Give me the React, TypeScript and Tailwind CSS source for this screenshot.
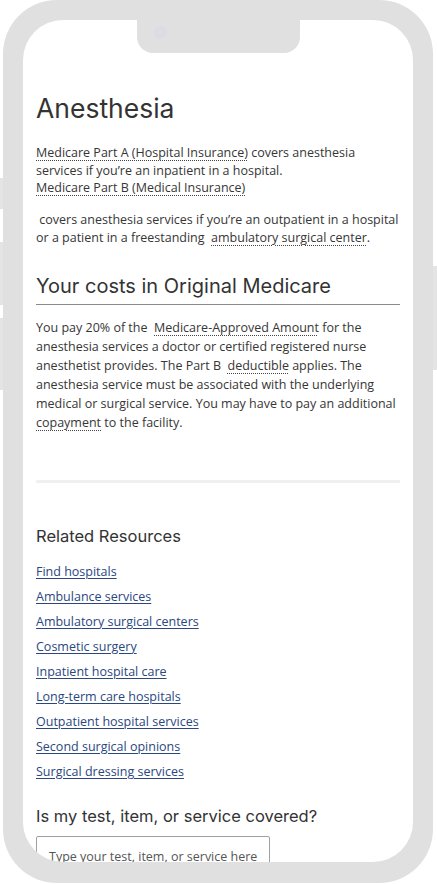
import React from "react";

const heading = "font-['Inter','Noto_Sans',sans-serif]";
const body = "font-['Open_Sans','Noto_Sans',sans-serif]";

function Term({ children }: { children: React.ReactNode }) {
  return (
    <span className="underline decoration-dotted decoration-[#444] decoration-1 underline-offset-[3px]">
      {children}
    </span>
  );
}

const resources = [
  "Find hospitals",
  "Ambulance services",
  "Ambulatory surgical centers",
  "Cosmetic surgery",
  "Inpatient hospital care",
  "Long-term care hospitals",
  "Outpatient hospital services",
  "Second surgical opinions",
  "Surgical dressing services",
];

export default function App() {
  return (
    <div className="relative w-[437px] h-[884px] bg-white overflow-hidden">
      {/* side buttons */}
      <div className="absolute left-0 top-[178px] w-[6px] h-[31px] bg-[#e4e4e4]" />
      <div className="absolute left-0 top-[242px] w-[6px] h-[63px] bg-[#e4e4e4]" />
      <div className="absolute left-0 top-[318px] w-[6px] h-[72px] bg-[#e4e4e4]" />
      <div className="absolute right-0 top-[266px] w-[8px] h-[104px] bg-[#e4e4e4]" />

      {/* phone frame */}
      <div className="relative ml-[3px] w-[430px] h-[883px] rounded-[54px] bg-[#e0e0e0] pt-[20px] pl-[20px]">
        <div className="relative w-[390px] h-[842px] rounded-[40px] bg-white overflow-hidden">
          {/* notch */}
          <div className="absolute left-[114px] top-0 w-[163px] h-[33px] rounded-b-[16px] bg-[#e0e0e0]">
            <div className="absolute left-[17px] top-[6px] w-[13px] h-[13px] rounded-full bg-[#dcdce5]" />
          </div>

          <div className={`px-[13px] pt-[72px] text-[#363636] ${body}`}>
            <h1 className={`${heading} text-[26.5px] leading-[32px] text-[#333]`}>Anesthesia</h1>

            <div className="mt-[20px] text-[12.5px] leading-[17.5px]">
              <p>
                <Term>Medicare Part A (Hospital Insurance)</Term> covers anesthesia services if you’re an
                inpatient in a hospital.
              </p>
              <p>
                <Term>Medicare Part B (Medical Insurance)</Term>
              </p>
            </div>
            <p className="mt-[14px] text-[12.5px] leading-[18px]">
              {"\u00a0"}covers anesthesia services if you’re an outpatient in a hospital or a patient in a
              freestanding{"\u00a0 "}<Term>ambulatory surgical center</Term>.
            </p>

            <h2 className={`${heading} mt-[27px] pb-[6px] border-b border-[#8a8a8a] text-[20px] leading-[24px] text-[#333]`}>
              Your costs in Original Medicare
            </h2>
            <p className="mt-[13px] text-[12.5px] leading-[19px]">
              You pay 20% of the{"\u00a0 "}<Term>Medicare-Approved Amount</Term> for the anesthesia services
              a doctor or certified registered nurse anesthetist provides. The Part B{"\u00a0 "}
              <Term>deductible</Term> applies. The anesthesia service must be associated with the underlying
              medical or surgical service. You may have to pay an additional <Term>copayment</Term> to the
              facility.
            </p>

            <div className="mt-[48px] h-[3px] bg-[#f0f0f0]" />

            <h3 className={`${heading} mt-[43px] text-[16.5px] leading-[20px] text-[#333]`}>Related Resources</h3>
            <ul className="mt-[17px] flex flex-col gap-[7px]">
              {resources.map((r) => (
                <li key={r} className="text-[12.5px] leading-[18px]">
                  <a className="text-[#2a4780] underline decoration-1 underline-offset-[2px]" href="#">
                    {r}
                  </a>
                </li>
              ))}
            </ul>

            <h3 className={`${heading} mt-[24px] text-[16.5px] leading-[22px] text-[#333]`}>
              Is my test, item, or service covered?
            </h3>
            <div className="mt-[9px] w-[234px] h-[44px] border border-[#a0a0a0] rounded-[2px] pl-[12px] pt-[11px] text-[12.5px] leading-[18px] text-[#555]">
              Type your test, item, or service here
            </div>
          </div>
        </div>
      </div>
    </div>
  );
}
